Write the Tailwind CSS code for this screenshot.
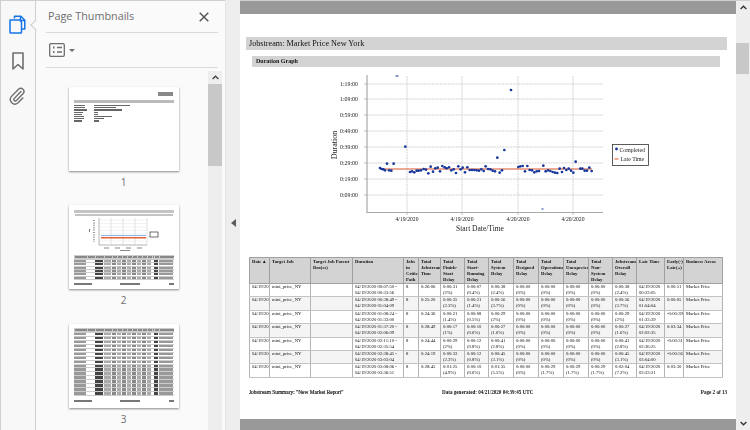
<!DOCTYPE html>
<html lang="en">
  <head>
    <meta charset="UTF-8" />
    <title>Page Thumbnails</title>
    <script src="https://cdn.jsdelivr.net/npm/@tailwindcss/browser@4"></script>
  </head>
  <body class="bg-white overflow-hidden">
    <div class="flex w-[750px] h-[430px] overflow-hidden">
      <!-- Rail -->
      <div class="relative w-[36px] shrink-0 bg-[#f8f8f8] border-t border-l border-r border-[#cfcfcf] flex flex-col items-center pt-[14px] pr-px">
        <svg class="w-[17px] h-[19px]" viewBox="0 0 17 19" fill="none" stroke="#1473e6" stroke-width="1.5" stroke-linejoin="round">
          <path d="M5.5 3.5V1.2h6.3l4 4V14h-3" />
          <path d="M11.5 1.2v4.3h4.3" />
          <path d="M1 5h9.5l2 2v10.2a.8.8 0 0 1-.8.8H1.8a.8.8 0 0 1-.8-.8z" fill="#f8f8f8" />
        </svg>
        <svg class="w-[12px] h-[18px] mt-[18px]" viewBox="0 0 12 18" fill="none" stroke="#6e6e6e" stroke-width="1.6" stroke-linejoin="round">
          <path d="M1 1h10v16l-5-4.5L1 17z" />
        </svg>
        <svg class="w-[17px] h-[18px] mt-[17px]" viewBox="0 0 17 18" fill="none" stroke="#6e6e6e" stroke-width="1.4" stroke-linecap="round">
          <path d="M12.5 5.5 5.6 12.6a1.5 1.5 0 0 0 2.1 2.1l7-7.2a3.2 3.2 0 0 0-4.5-4.5L2.8 10.6a4.6 4.6 0 0 0 6.5 6.4l5-5" transform="translate(-.5 -1)" />
        </svg>
        <div class="absolute right-[-1px] top-[20px] w-[8px] h-[8px] rotate-45 translate-x-[4px] bg-[#fafafa] border-l border-b border-[#cfcfcf]"></div>
      </div>

      <!-- Thumbnails panel -->
      <div class="w-[189px] shrink-0 bg-[#fafafa] border-t border-[#cfcfcf] flex flex-col">
        <div class="mx-[10px] mr-[7px] h-[32px] flex items-center justify-between border-b border-[#d9d9d9] font-['Open_Sans',sans-serif] text-[10.800px] text-[#6e6e6e] pl-[2px]">
          <span>Page Thumbnails</span>
          <svg class="w-[10px] h-[10px] mr-[9px]" viewBox="0 0 11 11" stroke="#555" stroke-width="1.6"><path d="M.8.8l9.4 9.4M10.2.8.8 10.2" /></svg>
        </div>
        <div class="mx-[10px] mr-[7px] h-[35px] flex items-center border-b border-[#d9d9d9] pl-[3px]">
          <svg class="w-[16px] h-[14px]" viewBox="0 0 16 14" fill="none">
            <rect x=".7" y=".7" width="14.6" height="12.6" rx="1.2" stroke="#6e6e6e" stroke-width="1.3" />
            <path d="M4 4.5h1.5M4 9h1.5" stroke="#6e6e6e" stroke-width="2" />
            <path d="M8 4.5h5M8 9h5" stroke="#6e6e6e" stroke-width="1.4" />
          </svg>
          <span class="ml-[4px] w-0 h-0 border-x-[3px] border-x-transparent border-t-[3px] border-t-[#6e6e6e]"></span>
        </div>
        <div class="flex flex-1 min-h-0">
          <div class="flex-1 flex flex-col items-center pt-[19px] pl-[3px] overflow-hidden">
            <!-- Thumb 1 -->
            <div class="w-[110px] h-[84px] shrink-0 bg-white shadow-[0_1px_2px_rgba(0,0,0,0.45)] px-[5px] pt-[5px] blur-[0.4px]">
              <div class="flex justify-end pr-[1px]"><div class="w-[15px] h-[4px] bg-[#888]"></div></div>
              <div class="mt-[4px] h-[3px] bg-[#bbb]"></div>
              <div id="coverLines" class="mt-[2px] flex flex-col gap-[1px]"></div>
            </div>
            <div class="h-[34px] shrink-0 pt-[4px] font-['Open_Sans',sans-serif] text-[10px] text-[#6e6e6e]">1</div>
            <!-- Thumb 2 -->
            <div class="w-[110px] h-[84px] shrink-0 bg-white shadow-[0_1px_2px_rgba(0,0,0,0.45)] px-[5px] pt-[5px] blur-[0.3px] flex flex-col">
              <div class="h-[3px] bg-[#c4c4c4]"></div>
              <div class="mt-[1px] mx-[1px] h-[2px] bg-[#c4c4c4]"></div>
              <svg class="w-[100px] h-[38px] shrink-0 mt-[1px]" viewBox="0 0 100 38" fill="none">
                <path d="M37 1v27M49 1v27M61 1v27M73 1v27" stroke="#ccc" stroke-width=".6" />
                <path d="M25 3h48M25 6.500h48M25 10h48M25 13.500h48M25 17h48M25 24h48" stroke="#ddd" stroke-width=".4" />
                <path d="M25 1v27h48" stroke="#999" stroke-width=".7" />
                <path d="M20 3v22" stroke="#999" stroke-width="2" stroke-dasharray="1 1.400" />
                <path d="M15.500 12v3" stroke="#777" stroke-width="1" />
                <rect x="27" y="18" width="45" height="1" fill="#8fb6ee" />
                <rect x="27" y="20" width="45" height="1.500" fill="#e8613c" />
                <rect x="76" y="15" width="8" height="5" stroke="#333" stroke-width=".7" />
                <path d="M30 31h5M41 31h5M52 31h5M63 31h5M46 33.500h10" stroke="#888" stroke-width="1" />
              </svg>
              <div id="thumbTable2"></div>
              <div class="mt-[3px] flex justify-between"><div class="w-[18px] h-[1.500px] bg-[#777]"></div><div class="w-[20px] h-[1.500px] bg-[#777]"></div><div class="w-[5px] h-[1.500px] bg-[#777]"></div></div>
            </div>
            <div class="h-[35px] shrink-0 pt-[4px] font-['Open_Sans',sans-serif] text-[10px] text-[#6e6e6e]">2</div>
            <!-- Thumb 3 -->
            <div class="w-[110px] h-[84px] shrink-0 bg-white shadow-[0_1px_2px_rgba(0,0,0,0.45)] px-[5px] pt-[4px] blur-[0.3px] flex flex-col">
              <div id="thumbTable3"></div>
              <div class="mt-[4px] flex justify-between"><div class="w-[18px] h-[1.500px] bg-[#777]"></div><div class="w-[20px] h-[1.500px] bg-[#777]"></div><div class="w-[5px] h-[1.500px] bg-[#777]"></div></div>
            </div>
            <div class="h-[20px] shrink-0 pt-[4px] font-['Open_Sans',sans-serif] text-[10px] text-[#6e6e6e]">3</div>
          </div>
          <!-- Panel scrollbar -->
          <div class="w-[14px] shrink-0 bg-[#eeeeee] mr-[3px] mt-[3px] flex flex-col">
            <div class="h-[13px] flex items-center justify-center">
              <svg class="w-[7px] h-[5px]" viewBox="0 0 7 5" fill="none" stroke="#444" stroke-width="1.300"><path d="M.6 4 3.500 1.200 6.400 4" /></svg>
            </div>
            <div class="h-[82px] bg-[#c8c8c8]"></div>
          </div>
        </div>
      </div>

      <!-- Collapse gutter -->
      <div class="w-[15px] shrink-0 bg-[#eeeeee] border-l border-[#e4e4e4] flex items-center justify-center">
        <span class="w-0 h-0 border-y-[4px] border-y-transparent border-r-[5px] border-r-[#5c5c5c] mt-[16px]"></span>
      </div>

      <!-- Document -->
      <div class="flex-1 min-w-0 flex flex-col font-['Liberation_Serif',serif] text-[#111]">
        <div class="h-[14px] shrink-0 bg-[#999999] border-t border-[#cfcfcf]"></div>
        <div class="flex-1 min-h-0 bg-white pt-[23px] blur-[0.25px]">
          <div class="ml-[6px] mr-[9px] h-[13px] bg-[#d3d3d3] pl-[3px] text-[8.200px] leading-[13px]">Jobstream: Market Price New York</div>
          <div class="mt-[6px] ml-[12px] mr-[16px] h-[11px] bg-[#d3d3d3] pl-[4px] text-[6px] leading-[11px] font-bold">Duration Graph</div>
          <!-- Chart -->
          <svg id="chart" class="block w-[496px] h-[187px]" viewBox="240 67 496 187" font-family="Liberation Serif, serif" fill="#222">
            <g id="grid" stroke="#c8c8c8" stroke-width=".8" stroke-dasharray="2 .7" fill="none">
              <path d="M367 84H603M367 99H603M367 115H603M367 131H603M367 147H603M367 163H603M367 179H603M367 195H603" />
              <path d="M407 76V212M462 76V212M518 76V212M573 76V212" />
            </g>
            <path d="M367 75V212.500H603" stroke="#a8a8a8" stroke-width="1.200" fill="none" />
            <path d="M364 84h3M364 99h3M364 115h3M364 131h3M364 147h3M364 163h3M364 179h3M364 195h3M407 212v3M462 212v3M518 212v3M573 212v3" stroke="#a8a8a8" stroke-width=".7" />
            <g font-size="5.900" text-anchor="end">
              <text x="358" y="86">1:19:00</text><text x="358" y="101">1:09:00</text><text x="358" y="117">0:59:00</text><text x="358" y="133">0:49:00</text>
              <text x="358" y="149">0:39:00</text><text x="358" y="165">0:29:00</text><text x="358" y="181">0:19:00</text><text x="358" y="197">0:09:00</text>
            </g>
            <g font-size="5.700" text-anchor="middle">
              <text x="407" y="221">4/19/2020</text><text x="462" y="221">4/19/2020</text><text x="518" y="221">4/20/2020</text><text x="573" y="221">4/20/2020</text>
            </g>
            <text x="480" y="231" font-size="7.500" text-anchor="middle">Start Date/Time</text>
            <text transform="translate(337 145) rotate(-90)" font-size="8" text-anchor="middle">Duration</text>
            <rect x="380" y="168.500" width="212" height="1" fill="#d9562b" />
            <g id="points" fill="#17379c"></g>
            <rect x="612.500" y="144.500" width="36" height="21" fill="white" stroke="#333" stroke-width=".8" />
            <circle cx="616.500" cy="149" r="1.400" fill="#17379c" />
            <rect x="614.500" y="158.500" width="4" height="1" fill="#d9562b" />
            <text x="619.500" y="151.500" font-size="5.800">Completed</text>
            <text x="620.500" y="161" font-size="5.800">Late Time</text>
          </svg>
          <!-- Table -->
          <table class="ml-[9px] mt-[3px] w-[473px] table-fixed border-collapse border border-[#a0a0a0] text-[4.700px] leading-[6px]">
            <colgroup>
              <col class="w-[20px]" /><col class="w-[41px]" /><col class="w-[42px]" /><col class="w-[51px]" /><col class="w-[15px]" /><col class="w-[22px]" /><col class="w-[24px]" /><col class="w-[24px]" /><col class="w-[25px]" /><col class="w-[25px]" /><col class="w-[25px]" /><col class="w-[25px]" /><col class="w-[24px]" /><col class="w-[24px]" /><col class="w-[28px]" /><col class="w-[19px]" /><col class="w-[39px]" />
            </colgroup>
            <thead>
              <tr id="headRow" class="h-[25px] bg-[#d3d3d3] align-top font-bold"></tr>
            </thead>
            <tbody id="rows"></tbody>
          </table>
          <div class="ml-[9px] mr-[9px] mt-[11px] flex text-[5.100px] leading-[7px] font-bold">
            <span class="w-[193px] text-[5.400px] font-normal [-webkit-text-stroke:0.15px_#111]">Jobstream Summary: "New Market Report"</span>
            <span class="flex-1">Data generated: 04/21/2020 04:39:45 UTC</span>
            <span>Page 2 of 13</span>
          </div>
        </div>
        <div class="h-[11px] shrink-0 bg-[#999999]"></div>
      </div>

      <!-- Document scrollbar -->
      <div class="w-[14px] shrink-0 bg-[#eeeeee] flex flex-col border-t border-[#cfcfcf]">
        <div class="h-[13px] flex items-center justify-center">
          <svg class="w-[7px] h-[5px]" viewBox="0 0 7 5" fill="none" stroke="#333" stroke-width="1.300"><path d="M.6 4 3.500 1.200 6.400 4" /></svg>
        </div>
        <div class="h-[31px] mt-[29px] mr-[1px] bg-[#c8c8c8]"></div>
        <div class="flex-1"></div>
        <div class="h-[13px] flex items-center justify-center">
          <svg class="w-[7px] h-[5px]" viewBox="0 0 7 5" fill="none" stroke="#333" stroke-width="1.300"><path d="M.6 1 3.500 3.800 6.400 1" /></svg>
        </div>
      </div>
    </div>

    <script>
      // points read off the reference, in page coordinates
      const pts = [[150,114],[155,117],[160,118],[165,121],[171,101],[177,121],[184,122],[191,101],[226,50],[240,126],[246,124],[253,127],[260,122],[266,122],[273,121],[281,117],[288,119],[295,130],[302,110],[309,125],[316,115],[323,113],[330,124],[337,108],[344,112],[350,115],[357,112],[364,121],[371,118],[378,129],[385,109],[392,118],[398,113],[405,127],[412,112],[419,120],[426,120],[433,120],[440,121],[447,122],[454,118],[461,123],[467,109],[474,117],[481,118],[488,122],[495,124],[502,83],[509,128],[516,121],[523,60],[565,111],[571,109],[578,108],[585,124],[592,108],[599,120],[606,121],[613,127],[620,124],[627,123],[640,107],[647,124],[654,121],[661,123],[668,126],[675,128],[682,129],[689,116],[696,126],[702,114],[709,120],[716,116],[723,122],[730,128],[737,95],[751,116],[757,116],[764,122],[771,122],[778,113],[785,123]];
      let dots = "";
      pts.forEach(([x, y]) => {
        dots += `<circle cx="${330 + x / 3}" cy="${130 + y / 3}" r="1.350" />`;
      });
      dots += '<rect x="395.500" y="75.500" width="3" height="1" /><circle cx="511" cy="90" r="1.350" /><rect x="541.500" y="208.500" width="2" height="1" />';
      document.getElementById("points").innerHTML = dots;

      const heads = ["Date \u25B4", "Target Job", "Target Job Parent Box(es)", "Duration", "Jobs in Critical Path", "Total Jobstream Time", "Total Finish-Start Delay", "Total Start-Running Delay", "Total System Delay", "Total Designed Delay", "Total Operational Delay", "Total Unexpected Delay", "Total Non-System Delay", "Jobstream Overall Delay", "Late Time", "Early(-) Late(+)", "Business Areas"];
      document.getElementById("headRow").innerHTML = heads.map((h) =>
        `<th class="border border-[#a0a0a0] px-[2px] pt-[1px] text-left font-bold overflow-hidden">${h}</th>`
      ).join("");

      const z = "0:00:00<br>(0%)";
      const rows = [
        ["00:07:50", "00:33:56", "0:26:06", "0:00:31<br>(2%)", "0:00:07<br>(0.4%)", "0:00:38<br>(2.4%)", z, z, z, z, "0:00:38<br>(2.4%)", "00:33:05", "0:00:51"],
        ["00:38:49", "01:04:09", "0:25:20", "0:00:35<br>(2.3%)", "0:00:21<br>(1.4%)", "0:00:56<br>(3.7%)", z, z, z, z, "0:00:56<br>(3.7%)", "01:04:04", "0:00:05"],
        ["01:08:24", "01:33:00", "0:24:36", "0:00:21<br>(1.4%)", "0:00:08<br>(0.5%)", "0:00:29<br>(2%)", z, z, z, z, "0:00:29<br>(2%)", "01:33:39", "-0:00:39"],
        ["01:37:20", "02:06:09", "0:28:49", "0:00:17<br>(1%)", "0:00:10<br>(0.6%)", "0:00:27<br>(1.6%)", z, z, z, z, "0:00:27<br>(1.6%)", "02:02:35", "0:03:34"],
        ["02:11:10", "02:35:54", "0:24:44", "0:00:29<br>(2%)", "0:00:12<br>(0.8%)", "0:00:41<br>(2.8%)", z, z, z, z, "0:00:41<br>(2.8%)", "02:36:25", "-0:00:31"],
        ["02:38:45", "03:03:04", "0:24:19", "0:00:33<br>(2.3%)", "0:00:12<br>(0.8%)", "0:00:45<br>(3.1%)", z, z, z, z, "0:00:45<br>(3.1%)", "03:04:00", "-0:00:56"],
        ["03:08:06", "03:36:51", "0:28:45", "0:01:25<br>(4.9%)", "0:00:10<br>(0.6%)", "0:01:35<br>(5.5%)", z, "0:00:29<br>(1.7%)", "0:00:29<br>(1.7%)", "0:00:29<br>(1.7%)", "0:02:04<br>(7.2%)", "03:33:21", "0:03:30"],
      ];
      document.getElementById("rows").innerHTML = rows.map((r, i) => {
        const cells = ["04/19/2020", "mini_price_NY", "", `04/19/2020 ${r[0]} -<br>04/19/2020 ${r[1]}`, "8", ...r.slice(2, 11), `04/19/2020<br>${r[11]}`, r[12], "Market Price"];
        const bg = i % 2 ? "bg-[#f4f4f4]" : "bg-white";
        return `<tr class="h-[13.400px] align-top ${bg}">` + cells.map((c) =>
          `<td class="border-y border-y-[#c4c4c4] border-x border-x-[#b4b4b4] px-[2px] whitespace-nowrap overflow-hidden">${c}</td>`
        ).join("") + "</tr>";
      }).join("");

      // cover page key/value lines
      const cover = [[11,36],[11,22],[13,28],[9,4],[8,4],[10,18],[10,10],[8,5]];
      document.getElementById("coverLines").innerHTML = cover.map(([a, b]) =>
        `<div class="flex"><div class="w-[20px]"><div class="h-[1.200px] bg-[#666]" style="width:${a}px"></div></div><div class="h-[1.200px] bg-[#666]" style="width:${b}px"></div></div>`
      ).join("");

      // tiny data tables inside the thumbnails
      function thumbTable(id, n, rowH) {
        const widths = [13, 8, 9, 8, 5, 5, 5, 5, 5, 5, 5, 5, 2, 5, 15];
        const tones = ["#999", "#fff", "#444", "#aaa", "#888", "#aaa", "#888", "#aaa", "#888", "#aaa", "#888", "#aaa", "#fff", "#444", "#999"];
        let html = '<div class="h-[5px] bg-[#ccc] flex gap-[1px] pt-[1px] pl-[1px]">' +
          widths.map((w) => `<div class="h-[2px] bg-[#888]" style="width:${w - 1}px"></div>`).join("") + "</div>";
        for (let i = 0; i < n; i++) {
          html += `<div class="flex border-b border-[#ccc]" style="height:${rowH}px">` +
            widths.map((w, j) => `<div style="width:${w}px"><div style="width:${w - 1}px;height:${rowH - 1.5}px;background:${tones[j]}"></div></div>`).join("") + "</div>";
        }
        document.getElementById(id).innerHTML = html;
      }
      thumbTable("thumbTable2", 6, 3.35);
      thumbTable("thumbTable3", 16, 3.95);
    </script>
  </body>
</html>
